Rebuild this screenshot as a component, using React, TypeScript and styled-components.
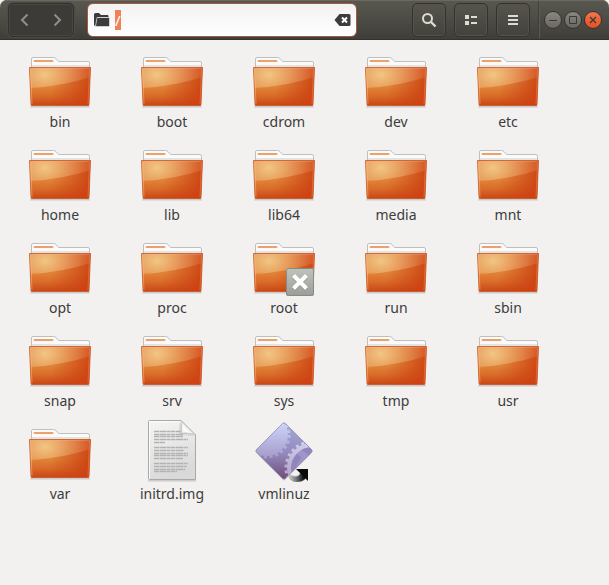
import React, { useEffect, useRef } from 'react';
import styled, { createGlobalStyle } from 'styled-components';

const GlobalStyle = createGlobalStyle`
  * { box-sizing: border-box; }
  body {
    margin: 0;
    background: #f2f1f0;
    color: #3c3c3c;
    font-family: "Noto Sans", "Open Sans", sans-serif;
    font-size: 14px;
  }
  button, input { font: inherit; }
`;

const Window = styled.div`
  min-height: 100vh;
`;

const HeaderBar = styled.header`
  display: flex;
  align-items: center;
  height: 40px;
  padding: 0 8px;
  border-radius: 7px 7px 0 0;
  border-bottom: 1px solid #33322e;
  background: linear-gradient(#595850, #3f3e39);
  box-shadow: inset 0 1px #6b695f;
`;

const NavGroup = styled.nav`
  display: flex;
  flex: none;
  width: 66px;
  height: 34px;
  border: 1px solid #32312d;
  border-radius: 5px;
  background: #3c3b37;
  box-shadow: inset 0 0 0 1px #484740, 0 0 0 1px #4c4b45;
`;

const IconButton = styled.button`
  display: flex;
  align-items: center;
  justify-content: center;
  padding: 0;
  border: 0;
  background: none;
  cursor: pointer;
`;

const NavButton = styled(IconButton)`
  flex: 1;
  color: #8f8d86;
`;

const LocationEntry = styled.label`
  display: flex;
  flex: 1;
  align-items: center;
  min-width: 80px;
  height: 34px;
  margin: 0 55px 0 13px;
  padding: 0 5px;
  border: 1px solid #a95a3b;
  border-radius: 6px;
  background: linear-gradient(#f2f2f2, #ffffff);
`;

const LocationInput = styled.input`
  flex: 1;
  min-width: 0;
  height: 20px;
  margin-left: 4px;
  padding: 0;
  border: 0;
  outline: 0;
  background: none;
  font-size: 15px;
  line-height: 18px;
  color: #3c3c3c;
  &::selection { background: #f08355; color: #ffffff; }
`;

const Tools = styled.div`
  display: flex;
  gap: 8px;
`;

const ToolButton = styled(IconButton)`
  width: 34px;
  height: 34px;
  border: 1px solid #33322e;
  border-radius: 5px;
  background: linear-gradient(#56544d, #43423c);
  box-shadow: inset 0 0 0 1px #55544c;
  color: #dfdbd2;
`;

const Separator = styled.span`
  width: 2px;
  height: 37px;
  margin: 0 4px 0 8px;
  border-left: 1px solid #3e3d38;
  border-right: 1px solid #5c5b53;
`;

const WindowControls = styled.div`
  display: flex;
  gap: 2px;
  margin-right: -1px;
`;

const ControlButton = styled(IconButton)<{ $close?: boolean }>`
  width: 18px;
  height: 18px;
  border: 1px solid #34332f;
  border-radius: 50%;
  color: #3a3935;
  background: ${p => (p.$close ? 'linear-gradient(#f37650, #e2501f)' : 'linear-gradient(#898780, #696760)')};
`;

const FileGrid = styled.ul`
  display: grid;
  grid-template-columns: repeat(auto-fill, 112px);
  grid-auto-rows: 93px;
  margin: 0;
  padding: 6px 4px;
  list-style: none;
`;

const FileItem = styled.li`
  display: flex;
  flex-direction: column;
  align-items: center;
`;

const FileName = styled.span`
  margin-top: 2px;
  line-height: 20px;
`;

const IconFrame = styled.svg`
  display: block;
  width: 64px;
  height: 64px;
`;

function FolderIcon({ id, locked }: { id: string; locked?: boolean }) {
  return (
    <IconFrame viewBox="0 0 64 64" aria-hidden="true">
      <defs>
        <linearGradient id={`${id}-front`} gradientUnits="userSpaceOnUse" x1="0" y1="21" x2="0" y2="60">
          <stop offset="0" stopColor="#e08f50" />
          <stop offset="0.5" stopColor="#e08538" />
          <stop offset="0.75" stopColor="#d96a28" />
          <stop offset="1" stopColor="#c84413" />
        </linearGradient>
        <linearGradient id={`${id}-right`} x1="0" y1="0" x2="1" y2="0.1">
          <stop offset="0.4" stopColor="#cc4212" stopOpacity="0" />
          <stop offset="1" stopColor="#cc4212" stopOpacity="0.9" />
        </linearGradient>
        <radialGradient id={`${id}-glow`} gradientUnits="userSpaceOnUse" cx="17" cy="29" r="46" gradientTransform="translate(0 7) scale(1 .75)">
          <stop offset="0" stopColor="#f2c683" />
          <stop offset="0.45" stopColor="#eba869" stopOpacity="0.7" />
          <stop offset="1" stopColor="#e88850" stopOpacity="0.2" />
        </radialGradient>
        <linearGradient id={`${id}-emblem`} x1="0" y1="0" x2="0" y2="1">
          <stop offset="0" stopColor="#c0c2bc" />
          <stop offset="1" stopColor="#9b9e98" />
        </linearGradient>
      </defs>
      <path d="M3 59h58l1 2.500H2z" fill="#000" opacity=".16" />
      <path d="M3.500 25V13Q3.500 11.500 5 11.500H25.500Q27 11.500 28 12.500L30.500 15.500H60Q61.500 15.500 61.500 17V25Z" fill="#fafafa" stroke="#bcc1bf" />
      <path d="M4 19h57v3H4z" fill="#e3e4e2" />
      <path d="M6.500 15H24.500" stroke="#eda06c" strokeWidth="2" strokeLinecap="round" />
      <path d="M1.500 21.500H62.500L61 58.500Q61 59.500 60 59.500H4Q3 59.500 3 58.500Z" fill={`url(#${id}-front)`} />
      <path d="M1.500 21.500H62.500L61 58.500Q61 59.500 60 59.500H4Q3 59.500 3 58.500Z" fill={`url(#${id}-right)`} />
      <path d="M1.500 21.500H62.500L62 31Q36 40 2.300 42Z" fill={`url(#${id}-glow)`} />
      <path d="M1.500 21.500H62.500L61 58.500Q61 59.500 60 59.500H4Q3 59.500 3 58.500Z" fill="none" stroke="#cb5726" strokeWidth=".8" />
      <path d="M2 22.500H61.500L60 58" fill="none" stroke="#ffb080" opacity=".3" />
      <path d="M2.500 23 4 58" stroke="#ffd19a" opacity=".4" />
      {locked && (
        <g>
          <rect x="34" y="36" width="28" height="28" rx="2" fill={`url(#${id}-emblem)`} />
          <rect x="34.500" y="36.500" width="27" height="27" rx="2" fill="none" stroke="#888b84" />
          <path d="m41.500 44.500 13 13m0-13-13 13" stroke="#6e716b" strokeWidth="4" opacity=".4" />
          <path d="m41.500 43.500 13 13m0-13-13 13" stroke="#fff" strokeWidth="4" />
        </g>
      )}
    </IconFrame>
  );
}

const textLines: [number, number][] = [
  [13, 27], [16, 29], [18, 29], [21, 34], [24, 11],
  [29, 34], [32, 30], [35, 34], [37, 34], [40, 29],
  [45, 34], [48, 33], [51, 31], [53, 23],
];

function DocumentIcon() {
  return (
    <IconFrame viewBox="0 0 64 64" aria-hidden="true">
      <defs>
        <linearGradient id="page" x1="0" y1="0" x2="0.3" y2="1">
          <stop offset="0" stopColor="#f6f6f5" />
          <stop offset="1" stopColor="#d8d9d8" />
        </linearGradient>
        <linearGradient id="fold" gradientUnits="userSpaceOnUse" x1="41" y1="16" x2="50" y2="7">
          <stop offset="0" stopColor="#e4e4e4" />
          <stop offset="0.5" stopColor="#ffffff" />
          <stop offset="1" stopColor="#c9cac9" />
        </linearGradient>
      </defs>
      <path d="M8 62.500h48" stroke="#000" strokeWidth="2" opacity=".15" />
      <path d="M8.500 3.500Q8.500 2.500 9.500 2.500H41L55.500 17V61.500H9.500Q8.500 61.500 8.500 60.500Z" fill="url(#page)" stroke="#a7a9a7" />
      <path d="M9.500 61V3.500H41" fill="none" stroke="#fff" opacity=".8" />
      <path d="M39 5v12l15 1z" opacity=".08" />
      <path d="M41 2.500Q42.500 9 41 15.500Q47 14 55.500 17Z" fill="url(#fold)" stroke="#b2b4b2" strokeWidth=".7" />
      {textLines.map(([y, width]) => (
        <path key={y} d={`M14 ${y + 0.5}h${width}`} stroke="#b2b2b2" strokeWidth="1.300" strokeDasharray="5 .5 7 .5 3 .5" />
      ))}
    </IconFrame>
  );
}

function ExecutableLinkIcon() {
  return (
    <IconFrame viewBox="0 0 64 64" aria-hidden="true">
      <defs>
        <linearGradient id="gem" x1="0" y1="0" x2="0" y2="1">
          <stop offset="0" stopColor="#a9b0dc" />
          <stop offset="0.55" stopColor="#938bbd" />
          <stop offset="1" stopColor="#6b4470" />
        </linearGradient>
        <linearGradient id="gear" gradientUnits="userSpaceOnUse" x1="20" y1="4" x2="20" y2="40">
          <stop offset="0" stopColor="#ccd6fa" />
          <stop offset="1" stopColor="#a69aca" />
        </linearGradient>
        <linearGradient id="ring" gradientUnits="userSpaceOnUse" x1="50" y1="22" x2="38" y2="60">
          <stop offset="0" stopColor="#d3d0f0" />
          <stop offset="1" stopColor="#b7a3c6" />
        </linearGradient>
        <linearGradient id="tail" x1="0" y1="0" x2="1" y2="0">
          <stop offset="0" stopColor="#e0e0e0" />
          <stop offset="0.45" stopColor="#777" />
          <stop offset="0.9" stopColor="#080808" />
        </linearGradient>
        <clipPath id="diamond">
          <path d="M30.500 5.500Q32 4 33.500 5.500L59.500 31.500Q61 33 59.500 34.500L33.500 60.500Q32 62 30.500 60.500L4.500 34.500Q3 33 4.500 31.500Z" />
        </clipPath>
      </defs>
      <path d="M32 7 59 34 32 61 5 34z" transform="translate(0 2)" opacity=".12" />
      <g clipPath="url(#diamond)">
        <path d="M0 0h64v64H0z" fill="url(#gem)" />
        <circle cx="15" cy="17" r="21" fill="url(#gear)" />
        <circle cx="15" cy="17" r="22" fill="none" stroke="url(#gear)" strokeWidth="3" strokeDasharray="3 2.760" />
        <circle cx="60" cy="50" r="23" fill="#9185bd" />
        <path d="M46 33 64 46M54 37 46 52M52 40 60 48" stroke="#aea3d4" strokeWidth="6" opacity=".55" />
        <circle cx="60" cy="50" r="23" fill="none" stroke="url(#ring)" strokeWidth="4" />
        <circle cx="60" cy="50" r="26" fill="none" stroke="url(#ring)" strokeWidth="3" strokeDasharray="3 2.830" />
      </g>
      <path d="M30.500 5.500Q32 4 33.500 5.500L59.500 31.500Q61 33 59.500 34.500L33.500 60.500Q32 62 30.500 60.500L4.500 34.500Q3 33 4.500 31.500Z" fill="none" stroke="#9690b4" strokeWidth=".8" />
      <path d="M36 56Q37.500 64 45 64Q51 64 54 60L49 54Q47 59 43 58.500Q40 58 36 56Z" fill="url(#tail)" stroke="#888" strokeWidth=".4" />
      <path d="M44 51H56V63Z" fill="#0b0b0b" />
    </IconFrame>
  );
}

const directories = [
  'bin', 'boot', 'cdrom', 'dev', 'etc', 'home', 'lib', 'lib64', 'media', 'mnt', 'opt',
  'proc', 'root', 'run', 'sbin', 'snap', 'srv', 'sys', 'tmp', 'usr', 'var',
];

export default function App() {
  const location = useRef<HTMLInputElement>(null);

  useEffect(() => {
    location.current?.focus();
    location.current?.select();
  }, []);

  return (
    <>
      <GlobalStyle />
      <Window>
        <HeaderBar>
          <NavGroup aria-label="History">
            <NavButton aria-label="Back">
              <svg width="10" height="14" viewBox="0 0 10 14"><path d="M7.500 1.500 2 7l5.500 5.500" fill="none" stroke="currentColor" strokeWidth="2" /></svg>
            </NavButton>
            <NavButton aria-label="Forward">
              <svg width="10" height="14" viewBox="0 0 10 14"><path d="M2.500 1.500 8 7l-5.500 5.500" fill="none" stroke="currentColor" strokeWidth="2" /></svg>
            </NavButton>
          </NavGroup>
          <LocationEntry>
            <svg width="18" height="16" viewBox="0 0 18 16" aria-hidden="true">
              <path d="M1 2.500Q1 1 2.500 1H6l2 2h6.500q1 0 1 1v1H4.500L2.500 14Q1 14 1 12.500Z" fill="#3c3c3c" />
              <path d="M4 5.500H16.500V13.500Q16.500 14.500 15.500 14.500H2.500Z" fill="#3c3c3c" stroke="#f7f7f7" strokeWidth=".6" />
            </svg>
            <LocationInput ref={location} aria-label="Location" defaultValue="/" spellCheck={false} />
            <IconButton type="button" aria-label="Clear location">
              <svg width="17" height="12" viewBox="0 0 17 12">
                <path d="M5.500 0H15q1.500 0 1.500 1.500v9Q16.500 12 15 12H5.500L.5 6Z" fill="#3c3c3c" />
                <path d="m8 3.500 5 5m0-5-5 5" stroke="#fff" strokeWidth="2" />
              </svg>
            </IconButton>
          </LocationEntry>
          <Tools>
            <ToolButton aria-label="Search">
              <svg width="16" height="16" viewBox="0 0 16 16" fill="none" stroke="currentColor">
                <circle cx="6.500" cy="6.500" r="4.500" strokeWidth="2" /><path d="m10 10 4.500 4.500" strokeWidth="2.400" />
              </svg>
            </ToolButton>
            <ToolButton aria-label="List view">
              <svg width="16" height="16" viewBox="0 0 16 16" fill="currentColor">
                <path d="M2 3h4v4H2zM2 9h4v4H2zM8 4h6v2H8zM8 10h6v2H8z" />
              </svg>
            </ToolButton>
            <ToolButton aria-label="Menu">
              <svg width="16" height="16" viewBox="0 0 16 16" fill="currentColor">
                <path d="M3 3h10v2H3zM3 7h10v2H3zM3 11h10v2H3z" />
              </svg>
            </ToolButton>
          </Tools>
          <Separator />
          <WindowControls>
            <ControlButton aria-label="Minimize">
              <svg width="16" height="16" viewBox="0 0 16 16"><path d="M4 8.500h8" stroke="currentColor" /></svg>
            </ControlButton>
            <ControlButton aria-label="Maximize">
              <svg width="16" height="16" viewBox="0 0 16 16"><path d="M4.500 4.500h7v7h-7z" fill="none" stroke="currentColor" /></svg>
            </ControlButton>
            <ControlButton $close aria-label="Close">
              <svg width="16" height="16" viewBox="0 0 16 16"><path d="m5 5 6 6m0-6-6 6" stroke="currentColor" strokeWidth="1.300" /></svg>
            </ControlButton>
          </WindowControls>
        </HeaderBar>
        <FileGrid>
          {directories.map(name => (
            <FileItem key={name}>
              <FolderIcon id={`folder-${name}`} locked={name === 'root'} />
              <FileName>{name}</FileName>
            </FileItem>
          ))}
          <FileItem>
            <DocumentIcon />
            <FileName>initrd.img</FileName>
          </FileItem>
          <FileItem>
            <ExecutableLinkIcon />
            <FileName>vmlinuz</FileName>
          </FileItem>
        </FileGrid>
      </Window>
    </>
  );
}
